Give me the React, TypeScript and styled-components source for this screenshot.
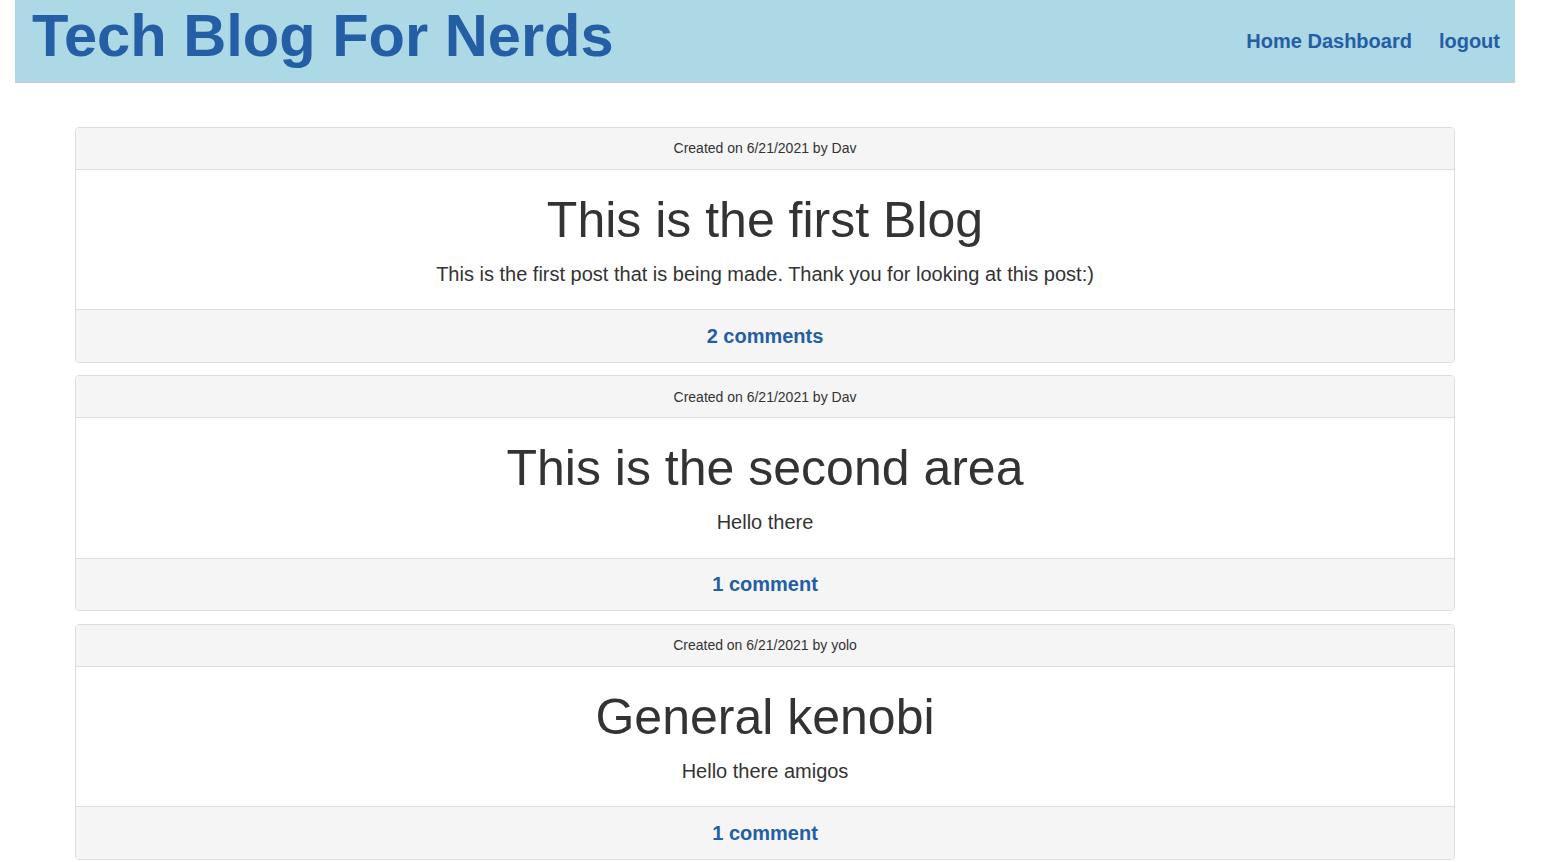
import React from "react";
import styled, { createGlobalStyle } from "styled-components";

const GlobalStyle = createGlobalStyle`
  html, body {
    margin: 0;
    padding: 0;
    background: #ffffff;
  }
  body {
    font-family: "Liberation Sans", Arial, Helvetica, sans-serif;
    color: #333333;
    overflow: hidden;
  }
  * { box-sizing: border-box; }
`;

const Page = styled.div`
  width: 1530px;
  padding: 0 15px;
`;

const Header = styled.header`
  display: flex;
  justify-content: space-between;
  align-items: flex-start;
  height: 83px;
  padding: 2px 15px 0 17px;
  background: #add8e6;
  border-bottom: 1px solid #c9c9c9;
`;

const SiteTitle = styled.h1`
  margin: 0;
  font-size: 59.6px;
  line-height: 67px;
  font-weight: 700;
  color: #245ea5;
`;

const Nav = styled.nav`
  display: flex;
  gap: 27px;
  padding-top: 27px;
`;

const NavLink = styled.a`
  font-size: 20px;
  line-height: 24px;
  font-weight: 700;
  color: #245ea5;
  text-decoration: none;
`;

const Main = styled.main`
  display: flex;
  flex-direction: column;
  gap: 12.7px;
  padding: 43.5px 60px 0;
`;

const Card = styled.article`
  border: 1px solid #dddddd;
  border-radius: 4px;
  background: #ffffff;
  overflow: hidden;
  text-align: center;
`;

const CardHeader = styled.div`
  padding: 10.5px 20px;
  font-size: 14px;
  line-height: 20px;
  background: #f5f5f5;
  border-bottom: 1px solid #dddddd;
`;

const CardBody = styled.div`
  display: flex;
  flex-direction: column;
  gap: 9px;
  padding: 20px 20px 20.5px;
`;

const PostTitle = styled.h2`
  margin: 0;
  font-size: 50px;
  line-height: 60px;
  font-weight: 400;
`;

const PostText = styled.p`
  margin: 0;
  font-size: 20px;
  line-height: 30px;
`;

const CardFooter = styled.div`
  padding: 15.5px 20px 15px;
  background: #f5f5f5;
  border-top: 1px solid #dddddd;
`;

const CommentLink = styled.a`
  font-size: 20px;
  line-height: 20px;
  font-weight: 700;
  color: #245ea5;
  text-decoration: none;
`;

const posts = [
  {
    author: "Dav",
    title: "This is the first Blog",
    text: "This is the first post that is being made. Thank you for looking at this post:)",
    comments: "2 comments",
  },
  {
    author: "Dav",
    title: "This is the second area",
    text: "Hello there",
    comments: "1 comment",
  },
  {
    author: "yolo",
    title: "General kenobi",
    text: "Hello there amigos",
    comments: "1 comment",
  },
];

export default function App() {
  return (
    <>
      <GlobalStyle />
      <Page>
        <Header>
          <SiteTitle>Tech Blog For Nerds</SiteTitle>
          <Nav>
            <NavLink href="#">Home Dashboard</NavLink>
            <NavLink href="#">logout</NavLink>
          </Nav>
        </Header>
        <Main>
          {posts.map((p, i) => (
            <Card key={i}>
              <CardHeader>Created on 6/21/2021 by {p.author}</CardHeader>
              <CardBody>
                <PostTitle>{p.title}</PostTitle>
                <PostText>{p.text}</PostText>
              </CardBody>
              <CardFooter>
                <CommentLink href="#">{p.comments}</CommentLink>
              </CardFooter>
            </Card>
          ))}
        </Main>
      </Page>
    </>
  );
}
